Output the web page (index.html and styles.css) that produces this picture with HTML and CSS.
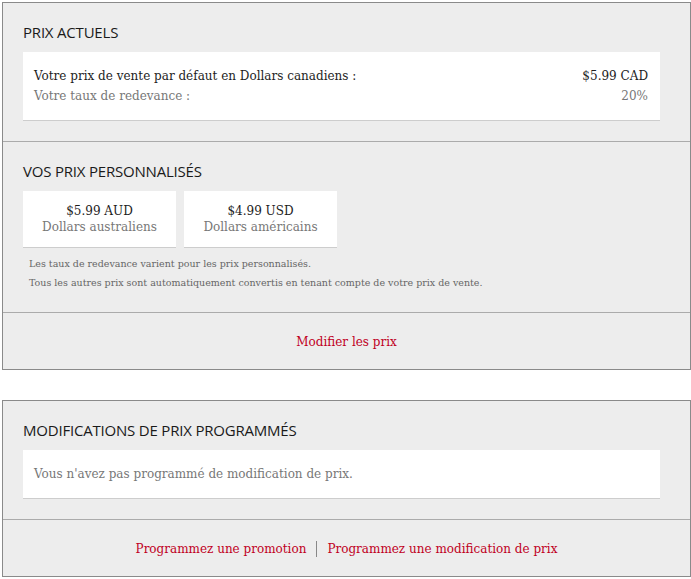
FILE: index.html
```html
<!DOCTYPE html>
<html lang="fr">
<head>
<meta charset="utf-8">
<title>Prix</title>
<link rel="stylesheet" href="styles.css">
</head>
<body>
<div class="panel">
  <section class="section">
    <h2 class="title">PRIX ACTUELS</h2>
    <div class="card card-current">
      <div class="row dark"><span>Votre prix de vente par défaut en Dollars canadiens :</span><span>$5.99 CAD</span></div>
      <div class="row muted"><span>Votre taux de redevance :</span><span>20%</span></div>
    </div>
  </section>
  <section class="section section-custom">
    <h2 class="title">VOS PRIX PERSONNALISÉS</h2>
    <div class="tiles">
      <div class="card tile"><div class="dark">$5.99 AUD</div><div class="muted">Dollars australiens</div></div>
      <div class="card tile"><div class="dark">$4.99 USD</div><div class="muted">Dollars américains</div></div>
    </div>
    <p class="note">Les taux de redevance varient pour les prix personnalisés.</p>
    <p class="note">Tous les autres prix sont automatiquement convertis en tenant compte de votre prix de vente.</p>
  </section>
  <div class="footer"><a class="link" href="#">Modifier les prix</a></div>
</div>

<div class="panel panel-second">
  <section class="section">
    <h2 class="title">MODIFICATIONS DE PRIX PROGRAMMÉS</h2>
    <div class="card card-empty"><span class="muted">Vous n'avez pas programmé de modification de prix.</span></div>
  </section>
  <div class="footer"><a class="link" href="#">Programmez une promotion</a><span class="sep"></span><a class="link" href="#">Programmez une modification de prix</a></div>
</div>
</body>
</html>
```
FILE: styles.css
```css
html, body { margin: 0; padding: 0; background: #fff; }
body { padding: 2px 1px 0 2px; font-family: "DejaVu Serif", "Liberation Serif", serif; font-size: 12px; }
.panel { width: 687px; background: #ededed; border: 1px solid #8a8a8a; }
.panel-second { margin-top: 30px; }
.section { padding: 0 30px 20px 20px; border-bottom: 1px solid #ababab; }
.title { margin: 0; height: 49px; box-sizing: border-box; padding-top: 19px; font-family: "Open Sans", "DejaVu Sans", sans-serif; font-weight: 400; font-size: 15px; letter-spacing: -0.2px; line-height: 20px; color: #1a1a1a; }
.card { background: #fff; border-bottom: 1px solid #cdcdcd; }
.card-current { padding: 14px 12px 14px 11px; }
.row { display: flex; justify-content: space-between; line-height: 20px; }
.dark { color: #1d1d1d; }
.muted { color: #777; }
.section-custom { padding-bottom: 20px; }
.tiles { display: flex; gap: 8px; margin-bottom: 6px; }
.tile { width: 153px; height: 57px; box-sizing: border-box; padding-top: 12px; text-align: center; line-height: 16px; }
.note { margin: 0 0 0 6px; font-size: 9.5px; line-height: 19px; color: #666; }
.card-empty { padding: 14px 11px; line-height: 20px; }
.footer { height: 56px; display: flex; align-items: center; justify-content: center; padding-top: 1px; box-sizing: border-box; }
.link { color: #c0001d; text-decoration: none; line-height: 20px; }
.sep { width: 1px; height: 16px; background: #888; margin: 0 10px; }
```
